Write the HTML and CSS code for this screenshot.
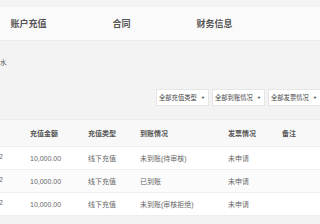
FILE: index.html
```html
<!DOCTYPE html>
<html lang="zh">
<head>
<meta charset="utf-8">
<link rel="stylesheet" href="styles.css">
</head>
<body>
<div class="tabs">
  <div class="tab">账户充值</div>
  <div class="tab">合同</div>
  <div class="tab">财务信息</div>
</div>
<div class="caption">水</div>
<div class="filters">
  <div class="select"><span>全部充值类型</span><span class="arrow">▼</span></div>
  <div class="select"><span>全部到账情况</span><span class="arrow">▼</span></div>
  <div class="select"><span>全部发票情况</span><span class="arrow">▼</span></div>
</div>
<table class="grid">
  <colgroup>
    <col class="c0"><col class="c1"><col class="c2"><col class="c3"><col class="c4"><col class="c5">
  </colgroup>
  <thead>
    <tr><th></th><th>充值金额</th><th>充值类型</th><th>到账情况</th><th>发票情况</th><th>备注</th></tr>
  </thead>
  <tbody>
    <tr><td class="cut">2</td><td>10,000.00</td><td>线下充值</td><td>未到账(待审核)</td><td>未申请</td><td></td></tr>
    <tr class="alt"><td class="cut">2</td><td>10,000.00</td><td>线下充值</td><td>已到账</td><td>未申请</td><td></td></tr>
    <tr><td class="cut">2</td><td>10,000.00</td><td>线下充值</td><td>未到账(审核拒绝)</td><td>未申请</td><td></td></tr>
  </tbody>
</table>
</body>
</html>
```
FILE: styles.css
```css
html, body {
  margin: 0;
  padding: 0;
}
body {
  width: 320px;
  height: 224px;
  overflow: hidden;
  background: #f3f3f3;
  font-family: "Liberation Sans", "Noto Sans CJK SC", sans-serif;
  color: #666;
}
.tabs {
  margin-top: 7px;
  height: 33px;
  background: #fafafa;
  border-bottom: 1px solid #ebebeb;
  display: flex;
  align-items: center;
  margin-left: -18px;
}
.tab {
  width: 93px;
  text-align: center;
  font-size: 9px;
  font-weight: bold;
  color: #555;
}
.caption {
  margin-top: 16px;
  height: 12px;
  line-height: 12px;
  font-size: 6.5px;
  color: #555;
}
.filters {
  margin-top: 20px;
  display: flex;
  gap: 3px;
  padding-left: 156px;
}
.select {
  flex: 0 0 53px;
  box-sizing: border-box;
  height: 17px;
  background: #fff;
  border: 1px solid #e6e6e6;
  display: flex;
  align-items: center;
  justify-content: space-between;
  padding: 0 3px 0 2px;
  font-size: 6.3px;
  color: #444;
  white-space: nowrap;
}
.arrow {
  font-size: 4px;
  color: #333;
}
.grid {
  margin-top: 13px;
  width: 320px;
  border-collapse: collapse;
  table-layout: fixed;
  font-size: 7px;
}
.c0 { width: 30px; }
.c1 { width: 58px; }
.c2 { width: 52px; }
.c3 { width: 88px; }
.c4 { width: 54px; }
.c5 { width: 38px; }
.grid th {
  height: 26px;
  background: #f8f8f8;
  border-top: 1px solid #ededed;
  text-align: left;
  font-weight: bold;
  color: #555;
  padding: 0;
}
.grid td {
  height: 22px;
  background: #fff;
  border-top: 1px solid #eeeeee;
  padding: 0;
  white-space: nowrap;
  color: #666;
}
.grid tr.alt td {
  background: #fbfbfb;
}
.grid tbody tr:last-child td {
  border-bottom: 1px solid #eeeeee;
}
.grid td.cut {
  text-indent: -1px;
  vertical-align: top;
  padding-top: 6px;
  height: 16px;
}
```
